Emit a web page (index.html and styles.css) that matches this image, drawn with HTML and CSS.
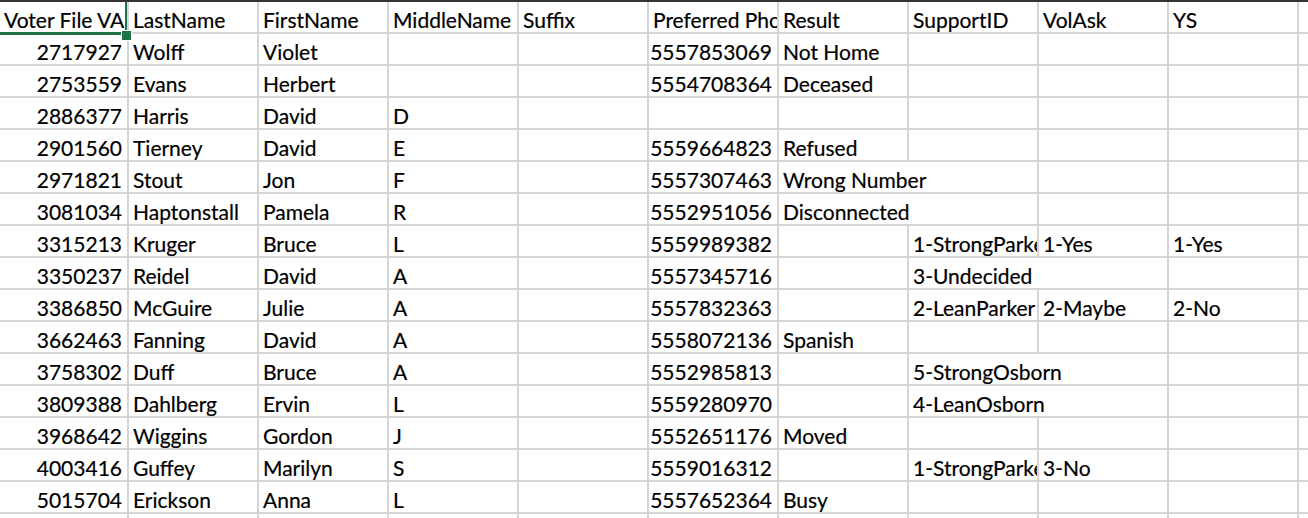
FILE: index.html
```html
<!DOCTYPE html>
<html>
<head>
<meta charset="utf-8">
<link rel="stylesheet" href="styles.css">
</head>
<body>
<div class="sheet">
  <div class="grid">
    <div class="c h">Voter File VAN</div><div class="c h">LastName</div><div class="c h">FirstName</div><div class="c h">MiddleName</div><div class="c h">Suffix</div><div class="c h">Preferred Phone</div><div class="c h">Result</div><div class="c h">SupportID</div><div class="c h">VolAsk</div><div class="c h">YS</div><div class="c h"></div>

    <div class="c n">2717927</div><div class="c">Wolff</div><div class="c">Violet</div><div class="c"></div><div class="c"></div><div class="c n">5557853069</div><div class="c">Not Home</div><div class="c"></div><div class="c"></div><div class="c"></div><div class="c"></div>

    <div class="c n">2753559</div><div class="c">Evans</div><div class="c">Herbert</div><div class="c"></div><div class="c"></div><div class="c n">5554708364</div><div class="c">Deceased</div><div class="c"></div><div class="c"></div><div class="c"></div><div class="c"></div>

    <div class="c n">2886377</div><div class="c">Harris</div><div class="c">David</div><div class="c">D</div><div class="c"></div><div class="c n"></div><div class="c"></div><div class="c"></div><div class="c"></div><div class="c"></div><div class="c"></div>

    <div class="c n">2901560</div><div class="c">Tierney</div><div class="c">David</div><div class="c">E</div><div class="c"></div><div class="c n">5559664823</div><div class="c">Refused</div><div class="c"></div><div class="c"></div><div class="c"></div><div class="c"></div>

    <div class="c n">2971821</div><div class="c">Stout</div><div class="c">Jon</div><div class="c">F</div><div class="c"></div><div class="c n">5557307463</div><div class="c span2">Wrong Number</div><div class="c"></div><div class="c"></div><div class="c"></div>

    <div class="c n">3081034</div><div class="c">Haptonstall</div><div class="c">Pamela</div><div class="c">R</div><div class="c"></div><div class="c n">5552951056</div><div class="c span2">Disconnected</div><div class="c"></div><div class="c"></div><div class="c"></div>

    <div class="c n">3315213</div><div class="c">Kruger</div><div class="c">Bruce</div><div class="c">L</div><div class="c"></div><div class="c n">5559989382</div><div class="c"></div><div class="c">1-StrongParker</div><div class="c">1-Yes</div><div class="c">1-Yes</div><div class="c"></div>

    <div class="c n">3350237</div><div class="c">Reidel</div><div class="c">David</div><div class="c">A</div><div class="c"></div><div class="c n">5557345716</div><div class="c"></div><div class="c span2">3-Undecided</div><div class="c"></div><div class="c"></div>

    <div class="c n">3386850</div><div class="c">McGuire</div><div class="c">Julie</div><div class="c">A</div><div class="c"></div><div class="c n">5557832363</div><div class="c"></div><div class="c">2-LeanParker</div><div class="c">2-Maybe</div><div class="c">2-No</div><div class="c"></div>

    <div class="c n">3662463</div><div class="c">Fanning</div><div class="c">David</div><div class="c">A</div><div class="c"></div><div class="c n">5558072136</div><div class="c">Spanish</div><div class="c"></div><div class="c"></div><div class="c"></div><div class="c"></div>

    <div class="c n">3758302</div><div class="c">Duff</div><div class="c">Bruce</div><div class="c">A</div><div class="c"></div><div class="c n">5552985813</div><div class="c"></div><div class="c span2">5-StrongOsborn</div><div class="c"></div><div class="c"></div>

    <div class="c n">3809388</div><div class="c">Dahlberg</div><div class="c">Ervin</div><div class="c">L</div><div class="c"></div><div class="c n">5559280970</div><div class="c"></div><div class="c span2">4-LeanOsborn</div><div class="c"></div><div class="c"></div>

    <div class="c n">3968642</div><div class="c">Wiggins</div><div class="c">Gordon</div><div class="c">J</div><div class="c"></div><div class="c n">5552651176</div><div class="c">Moved</div><div class="c"></div><div class="c"></div><div class="c"></div><div class="c"></div>

    <div class="c n">4003416</div><div class="c">Guffey</div><div class="c">Marilyn</div><div class="c">S</div><div class="c"></div><div class="c n">5559016312</div><div class="c"></div><div class="c">1-StrongParker</div><div class="c">3-No</div><div class="c"></div><div class="c"></div>

    <div class="c n">5015704</div><div class="c">Erickson</div><div class="c">Anna</div><div class="c">L</div><div class="c"></div><div class="c n">5557652364</div><div class="c">Busy</div><div class="c"></div><div class="c"></div><div class="c"></div><div class="c"></div>

    <div class="c"></div><div class="c"></div><div class="c"></div><div class="c"></div><div class="c"></div><div class="c"></div><div class="c"></div><div class="c"></div><div class="c"></div><div class="c"></div><div class="c"></div>
  </div>
  <div class="sel"></div>
  <div class="handle"></div>
</div>
</body>
</html>
```

FILE: styles.css
```css
html, body {
  margin: 0;
  padding: 0;
  background: #ffffff;
  overflow: hidden;
  height: 518px;
}

.sheet {
  position: relative;
  width: 1308px;
  height: 518px;
  overflow: hidden;
  border-top: 2px solid #333333;
  box-sizing: border-box;
}

.grid {
  display: grid;
  grid-template-columns: 127px repeat(9, 128px) 100px;
  grid-auto-rows: 30px;
  gap: 2px;
  background: #d5d5d5;
  font-family: "Lato", "Liberation Sans", sans-serif;
  font-size: 21px;
  color: #000000;
}

.c {
  background: #ffffff;
  white-space: nowrap;
  overflow: hidden;
  display: flex;
  align-items: flex-end;
  padding: 0 5px 2px 4px;
  line-height: 21px;
  min-width: 0;
  -webkit-text-stroke: 0.2px #000000;
}

.c.h {
  padding-bottom: 2px;
}

.c.n {
  justify-content: flex-end;
}

.c.span2 {
  grid-column: span 2;
}

.sel {
  position: absolute;
  left: -2px;
  top: -2px;
  width: 129px;
  height: 35px;
  border: 2px solid #217346;
  box-sizing: border-box;
  border-width: 2px 2px 3px 2px;
}

.handle {
  position: absolute;
  left: 121px;
  top: 28px;
  width: 9px;
  height: 9px;
  background: #217346;
  border: 1px solid #ffffff;
}
```
